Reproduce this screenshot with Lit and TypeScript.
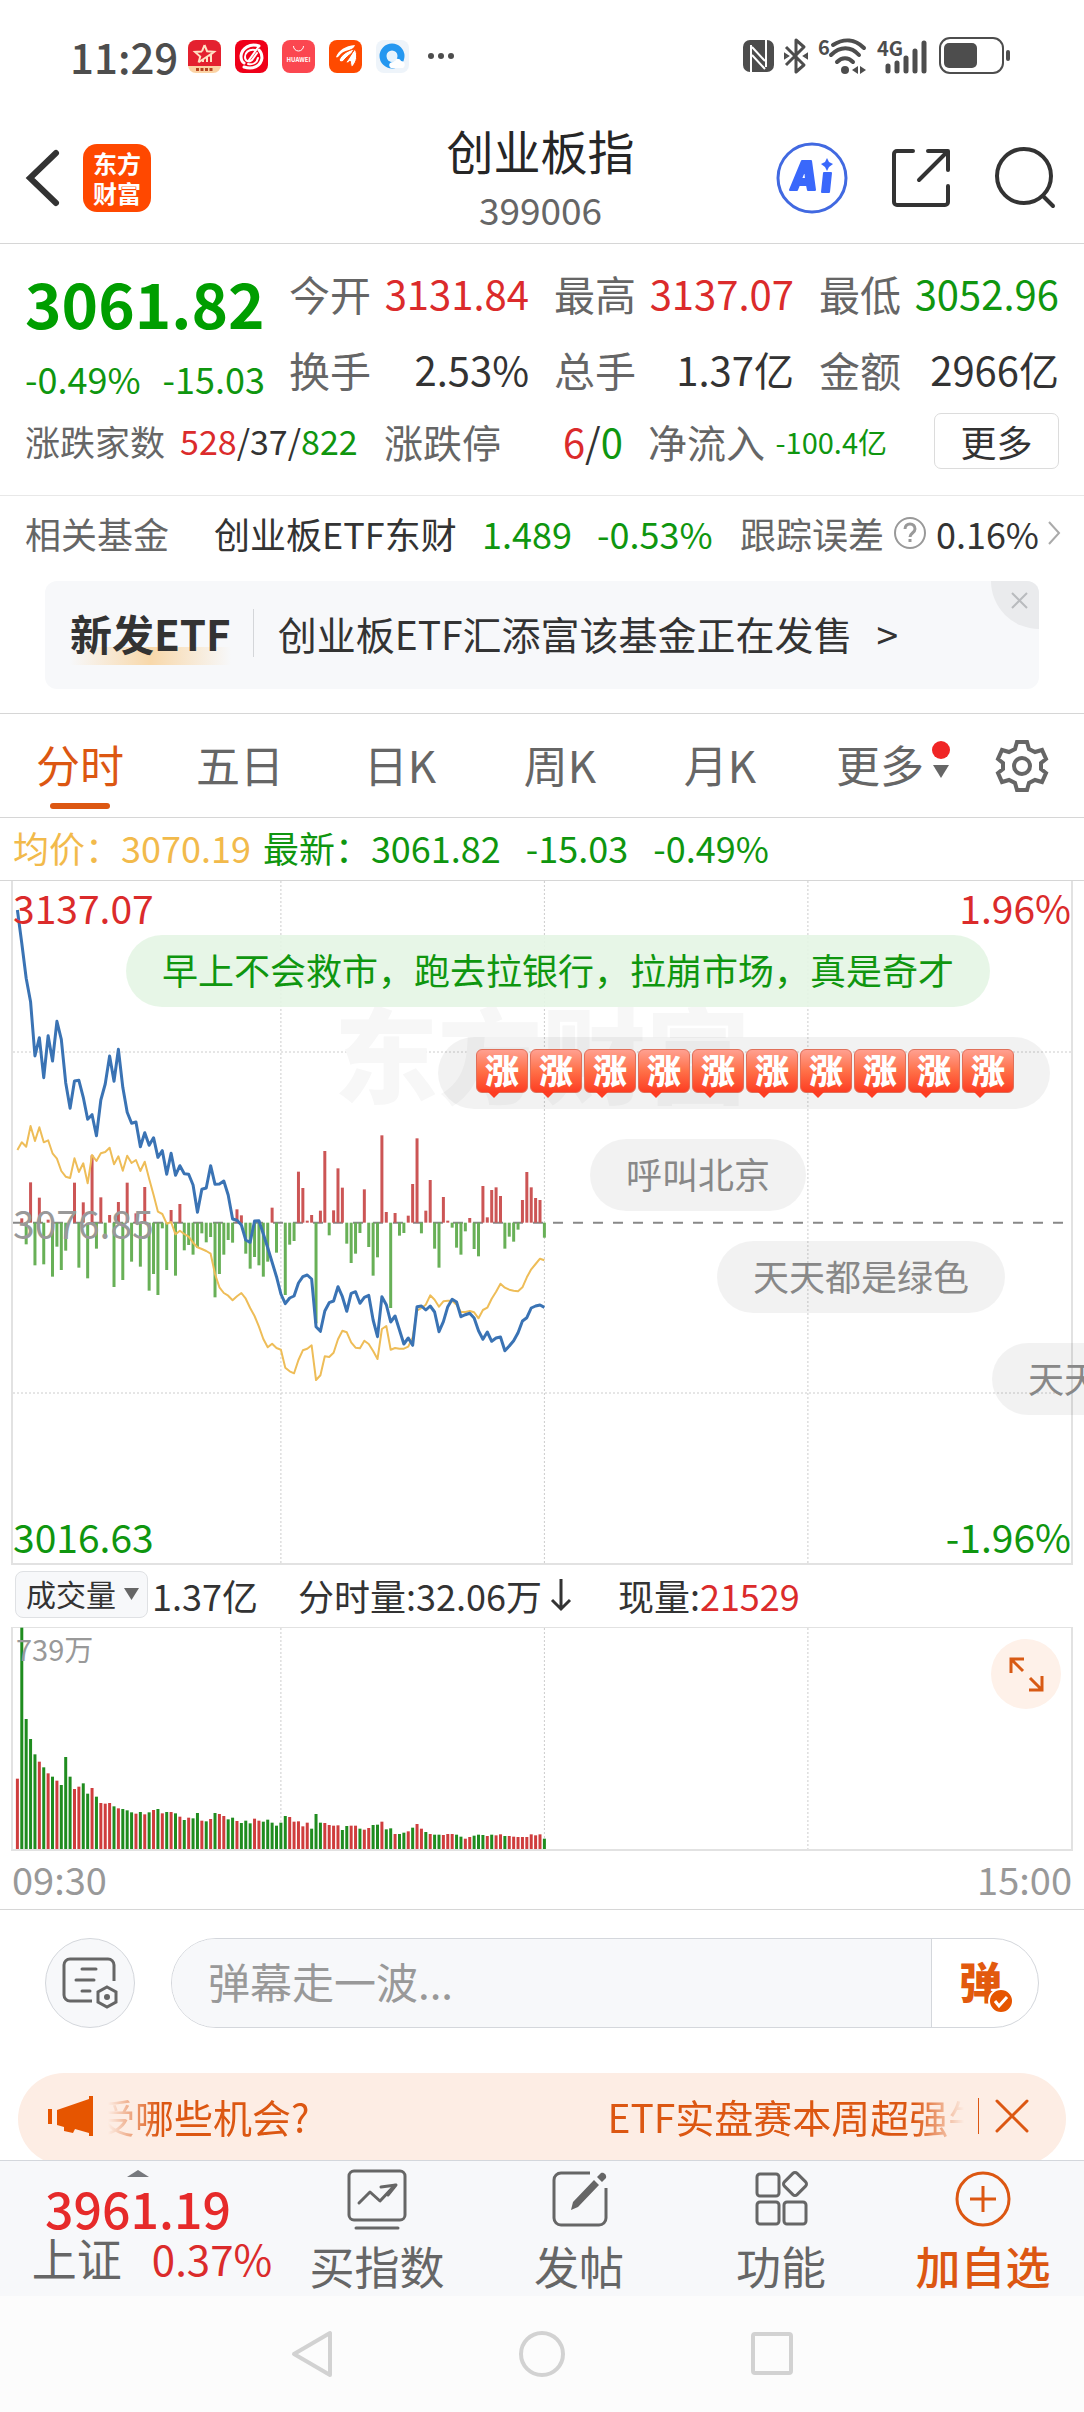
import { LitElement, html, svg, css } from "lit";

/* ---------- intraday series: one entry per minute, 09:30 to 11:30 ---------- */

// Distance from the top of the price chart, in thirds of a pixel.
const PRICE = [
  87, 187, 292, 362, 525, 470, 590, 464, 540, 421, 475, 605, 682, 600, 598, 649, 715, 701, 764, 657,
  609, 525, 601, 505, 619, 694, 727, 723, 797, 755, 793, 770, 829, 809, 880, 817, 883, 854, 878, 880,
  912, 994, 925, 921, 854, 910, 909, 900, 942, 1014, 1018, 1032, 1077, 1084, 1020, 1019, 1059, 1100, 1144, 1187,
  1239, 1268, 1251, 1245, 1206, 1187, 1182, 1194, 1337, 1351, 1290, 1265, 1260, 1217, 1247, 1291, 1237, 1232, 1267, 1249,
  1243, 1317, 1367, 1247, 1271, 1323, 1305, 1347, 1389, 1371, 1393, 1277, 1275, 1287, 1275, 1293, 1352, 1322, 1277, 1255,
  1263, 1307, 1301, 1297, 1311, 1349, 1375, 1353, 1381, 1371, 1368, 1409, 1395, 1379, 1355, 1320, 1310, 1281, 1275, 1272,
  1279,
];

const AVERAGE = [
  807, 784, 797, 735, 780, 739, 784, 778, 817, 833, 870, 887, 891, 832, 873, 847, 907, 822, 840, 817,
  813, 800, 850, 826, 869, 824, 846, 837, 870, 842, 893, 941, 992, 999, 1028, 1023, 1060, 1049, 1059, 1067,
  1085, 1099, 1104, 1110, 1118, 1179, 1219, 1236, 1244, 1258, 1246, 1236, 1253, 1281, 1305, 1337, 1374, 1399, 1388, 1401,
  1406, 1460, 1471, 1477, 1437, 1408, 1403, 1393, 1497, 1483, 1426, 1428, 1415, 1375, 1349, 1354, 1384, 1400, 1402, 1379,
  1389, 1410, 1434, 1344, 1335, 1406, 1401, 1403, 1403, 1397, 1369, 1289, 1281, 1271, 1243, 1256, 1277, 1261, 1259, 1259,
  1271, 1293, 1293, 1290, 1294, 1312, 1287, 1280, 1253, 1232, 1208, 1220, 1226, 1229, 1231, 1219, 1189, 1165, 1149, 1133,
  1138,
];

// Momentum bars around the previous close; positive rises, negative falls.
const MOMENTUM = [
  0, 13, -65, 121, -128, 75, -125, 9, -162, -72, -142, -84, 0, 120, -135, 61, -167, 202, -78, 76,
  -45, 23, -193, 62, -172, 120, -117, 28, -132, 107, -204, -154, -217, -17, -142, 38, -159, 56, -83, -67,
  -96, -75, -32, -59, -43, -224, -154, -96, -52, -60, 40, 22, -93, -138, -103, -128, -162, -117, 45, -90,
  0, -217, -66, -55, 153, 104, 6, 23, -302, 36, 215, -38, 37, 163, 105, -63, -121, -93, -31, 100,
  -73, -159, -104, 262, 32, -256, 29, -39, -31, 21, 116, 253, -32, 36, 128, -78, -135, 77, 6, -15,
  -75, -96, -26, 14, -79, -101, 110, 16, 98, 106, 80, -78, -42, -57, -21, 68, 152, 106, 74, 68,
  -45,
];

// Minute volume; positive is drawn red, negative green.
const VOLUME = [
  211, -664, -390, -330, -284, 262, -245, 227, -217, 205, -192, -276, -217, 180, 187, -197, -166, 183, -157, 138,
  136, 138, -128, 122, -120, -116, -110, 106, -111, 104, -110, 117, -120, 107, -111, 111, -107, 97, -87, 94,
  -92, -108, 85, -83, 90, -108, 105, 99, -89, -94, 84, -78, -85, -77, 91, 85, -82, -88, -79, -70,
  -79, -99, 96, 82, 83, 68, 79, -61, -105, -79, 78, 72, 70, 71, -57, -69, 70, 70, -61, 58,
  63, -72, -73, 82, -59, -62, 45, -45, -49, 53, -64, 75, 61, -51, 45, -43, -43, 42, 45, 45,
  -43, -37, 31, 36, -40, -43, -42, 39, -43, 41, 44, -39, 39, 37, 36, 36, 36, 44, 41, 44,
  -31,
];

const CHART_W = 1060;
const STEP = 4.4;
const PRICE_H = 682;
const VOLUME_H = 221;
const xOf = (i: number) => (i + 1) * STEP;
const points = (s: number[]) => s.map((v, i) => `${xOf(i).toFixed(1)},${(v / 3).toFixed(1)}`).join(" ");

const base = css`
  :host {
    display: block;
    font-family: "Noto Sans CJK SC", "Noto Sans", sans-serif;
    color: #333;
  }
  * {
    box-sizing: border-box;
  }
  svg {
    display: block;
    flex: none;
    overflow: visible;
  }
  button,
  input,
  select {
    font: inherit;
    color: inherit;
    margin: 0;
    padding: 0;
    border: 0;
    background: none;
    border-radius: 0;
    text-align: inherit;
  }
  .up {
    color: #db2b2b;
  }
  .down {
    color: #0f960f;
  }
`;

/* ------------------------------ status bar ------------------------------ */

class StatusBar extends LitElement {
  static styles = [
    base,
    css`
      .bar {
        display: flex;
        justify-content: space-between;
        align-items: center;
        height: 108px;
        padding: 4px 72px 0 70px;
        color: #4d4d4d;
      }
      .group {
        display: flex;
        align-items: center;
      }
      .time {
        font-size: 42px;
        font-weight: 500;
        line-height: 48px;
        margin-right: 10px;
      }
      .apps {
        display: flex;
        gap: 14px;
        margin-right: 18px;
      }
      .signals {
        gap: 9px;
      }
      text {
        font-family: "Noto Sans CJK SC", sans-serif;
      }
    `,
  ];
  render() {
    return html`
      <div class="bar">
        <div class="group">
          <span class="time">11:29</span>
          <span class="apps">
            <svg width="33" height="33" viewBox="0 0 33 33">
              <rect width="33" height="33" rx="8" fill="#fbd3a4" />
              <path d="M0 8a8 8 0 0 1 8-8h17a8 8 0 0 1 8 8v18H0z" fill="#e4212f" />
              <path d="M16.500 5l2.600 6.200 7 .5-5.200 4.300M14 11.400l-7 .5 5.200 4.600-1.600 6M16.500 5l-2.500 6.400" fill="none" stroke="#ffe3c4" stroke-width="2" />
              <path d="M11 22l12-8M15 22v-2M19 22v-5M23 22v-7" stroke="#ffe3c4" stroke-width="2" fill="none" />
              <path d="M8 29.500h17" stroke="#b5431f" stroke-width="3" stroke-dasharray="3 1.500" />
            </svg>
            <svg width="33" height="33" viewBox="0 0 33 33">
              <rect width="33" height="33" rx="8" fill="#ef0019" />
              <path d="M24 6C15 3 7 8 6 16c0 3 1 6 3 7M9 27c9 3 17-1 18-9 0-3-1-6-3-8" fill="none" stroke="#fff" stroke-width="3" stroke-linecap="round" />
              <path d="M24 6L14 20M20 10c-7-1-10 3-10 7s4 6 7 3l5-7M13 24c5 1 9-1 10-6" fill="none" stroke="#fff" stroke-width="2" stroke-linecap="round" />
            </svg>
            <svg width="33" height="33" viewBox="0 0 33 33">
              <rect width="33" height="33" rx="8" fill="#fb4750" />
              <path d="M11.500 6a5 5 0 0 0 10 0" fill="none" stroke="#fff" stroke-width="1" />
              <text x="16.500" y="22" fill="#fff" font-size="6" font-weight="700" text-anchor="middle">HUAWEI</text>
            </svg>
            <svg width="33" height="33" viewBox="0 0 33 33">
              <rect width="33" height="33" rx="8" fill="#ff4a00" />
              <path d="M7 17C10 10 16 6 26 5c-1 3-3 4-6 5-5 1-8 3-10 6-1 1-2 2-3 1z" fill="#fff" />
              <path d="M10 20c3-6 8-9 15-11-1 5-6 6-9 10-2 3-4 4-6 1zM17 22c3-3 5-8 9-13 3 6 2 13-3 18-2-2-1-5-2-6-1 1-3 3-4 1z" fill="#fff" stroke="#ff4a00" stroke-width="1" />
            </svg>
            <svg width="33" height="33" viewBox="0 0 33 33">
              <rect width="33" height="33" rx="8" fill="#eef4fa" />
              <circle cx="16" cy="16" r="9" fill="none" stroke="#2497f0" stroke-width="7" />
              <path d="M15 28c-3-2-2-6 2-6 1-4 7-4 8-1 4 0 5 5 2 7z" fill="#fff" />
              <circle cx="16" cy="17" r="5" fill="#e6f3fd" />
            </svg>
          </span>
          <svg width="28" height="8" viewBox="0 0 28 8" fill="#4d4d4d">
            <circle cx="4" cy="4" r="3" /><circle cx="14" cy="4" r="3" /><circle cx="24" cy="4" r="3" />
          </svg>
        </div>
        <div class="group signals">
          <svg width="31" height="34" viewBox="0 0 31 34">
            <rect y="1" width="31" height="32" rx="7" fill="#4d4d4d" />
            <path d="M8 6v27M23 1v27" stroke="#fff" stroke-width="2" />
            <path d="M9 8l13 14M9 16l13 14" stroke="#fff" stroke-width="2" />
          </svg>
          <svg width="26" height="36" viewBox="0 0 26 36" fill="none" stroke="#4d4d4d" stroke-width="3">
            <path d="M3 9l18 18-8 7V2l8 7L3 27" stroke-linejoin="round" />
            <path d="M2 16l3 2-3 2zM24 16l-3 2 3 2z" stroke-width="2" />
          </svg>
          <svg width="50" height="38" viewBox="0 0 50 38" fill="none" stroke="#4d4d4d" stroke-width="4" stroke-linecap="round">
            <text x="0" y="18" font-size="20" font-weight="700" fill="#4d4d4d" stroke="none">6</text>
            <path d="M15 8c11-7 22-6 31 3M13 18c9-9 20-9 28 0M19 25c5-5 11-5 16 0" />
            <circle cx="27" cy="33" r="4" fill="#4d4d4d" stroke="none" />
            <path d="M40 29v8l-6-4zM42 37v-8l6 4z" fill="#4d4d4d" stroke="none" />
          </svg>
          <svg width="52" height="38" viewBox="0 0 52 38" stroke="#4d4d4d" stroke-width="5" stroke-linecap="round">
            <text x="0" y="19" font-size="20" font-weight="700" fill="#4d4d4d" stroke="none">4G</text>
            <path d="M11 29v5M20 26v8M29 21v13M38 14v20M47 6v28" />
          </svg>
          <svg width="74" height="38" viewBox="0 0 74 38">
            <rect x="2" y="1" width="63" height="35" rx="10" fill="none" stroke="#4d4d4d" stroke-width="2" />
            <rect x="6" y="6" width="33" height="25" rx="5" fill="#4d4d4d" />
            <rect x="68" y="13" width="4" height="11" rx="2" fill="#4d4d4d" />
          </svg>
        </div>
      </div>
    `;
  }
}
customElements.define("status-bar", StatusBar);

/* ------------------------------ page header ------------------------------ */

class PageHeader extends LitElement {
  static styles = [
    base,
    css`
      .bar {
        display: grid;
        grid-template-columns: 1fr auto 1fr;
        align-items: center;
        height: 136px;
        padding: 4px 28px 0 25px;
        border-bottom: 1px solid #d6d6d6;
      }
      .side {
        display: flex;
        align-items: center;
      }
      .left {
        gap: 22px;
      }
      .right {
        justify-content: flex-end;
        gap: 43px;
      }
      .title {
        text-align: center;
        margin: 0;
        font-weight: 400;
      }
      .name {
        display: block;
        font-size: 47px;
        line-height: 62px;
        color: #262626;
      }
      .code {
        display: block;
        font-size: 37px;
        line-height: 56px;
        color: #666;
      }
      .logo {
        display: grid;
        place-content: center;
        width: 68px;
        height: 68px;
        border-radius: 14px;
        background: #ff4800;
        color: #fff;
        font-size: 24px;
        font-weight: 700;
        line-height: 30px;
        text-decoration: none;
      }
    `,
  ];
  render() {
    return html`
      <header class="bar">
        <div class="side left">
          <button aria-label="返回">
            <svg width="36" height="58" viewBox="0 0 36 58" fill="none" stroke="#333" stroke-width="6" stroke-linecap="round">
              <path d="M31 4L5 29l26 25" />
            </svg>
          </button>
          <a class="logo" href="#home"><span>东方</span><span>财富</span></a>
        </div>
        <h1 class="title"><span class="name">创业板指</span><span class="code">399006</span></h1>
        <div class="side right">
          <button aria-label="AI">
            <svg width="72" height="72" viewBox="0 0 72 72">
              <circle cx="36" cy="36" r="34" fill="#fff" stroke="#4169e1" stroke-width="3" />
              <path fill="#3a68fb" fill-rule="evenodd" stroke="#3a68fb" stroke-width="2" stroke-linejoin="round" d="M26 19h9l4 29h-7l-1-5h-8l-2 5h-7zM29 27l-4 10h5zM48 31h7l-2 19h-7z" />
              <path fill="#3a68fb" d="M51 16l2 4 4 2-4 3-2 4-2-4-4-3 4-2z" />
            </svg>
          </button>
          <button aria-label="分享">
            <svg width="60" height="60" viewBox="0 0 60 60" fill="none" stroke="#333" stroke-width="4" stroke-linecap="round" stroke-linejoin="round">
              <path d="M22 3H6a3 3 0 0 0-3 3v48a3 3 0 0 0 3 3h48a3 3 0 0 0 3-3V38M37 3h20v19M56 4L28 32" />
            </svg>
          </button>
          <button aria-label="搜索">
            <svg width="62" height="62" viewBox="0 0 62 62" fill="none" stroke="#333" stroke-width="4" stroke-linecap="round">
              <circle cx="30" cy="29" r="27" /><path d="M49 49l10 10" />
            </svg>
          </button>
        </div>
      </header>
    `;
  }
}
customElements.define("page-header", PageHeader);

/* ------------------------------ quote summary ------------------------------ */

const QUOTE = [
  ["今开", "3131.84", "up"],
  ["最高", "3137.07", "up"],
  ["最低", "3052.96", "down"],
  ["换手", "2.53%", ""],
  ["总手", "1.37亿", ""],
  ["金额", "2966亿", ""],
];

class QuoteSummary extends LitElement {
  static styles = [
    base,
    css`
      .summary {
        padding: 11px 25px 20px;
        border-bottom: 1px solid #e8e8e8;
      }
      .top {
        display: grid;
        grid-template-columns: minmax(0, 240fr) minmax(0, 770fr);
        column-gap: 24px;
      }
      .last {
        display: flex;
        flex-direction: column;
        white-space: nowrap;
      }
      .price {
        font-size: 62px;
        font-weight: 700;
        line-height: 94px;
        color: #009e00;
      }
      .change {
        display: flex;
        gap: 22px;
        font-size: 36px;
        line-height: 58px;
      }
      .pairs {
        display: grid;
        grid-template-columns: repeat(3, minmax(0, 1fr));
        column-gap: 25px;
        margin: 0;
      }
      .pair {
        display: flex;
        justify-content: space-between;
        margin: 0;
        line-height: 76px;
        font-size: 41px;
        white-space: nowrap;
      }
      dt {
        color: #666;
      }
      dd {
        margin: 0;
        font-size: 40px;
      }
      .row {
        display: grid;
        grid-template-columns: minmax(0, 334fr) minmax(0, 239fr) minmax(0, 239fr) minmax(0, 147fr);
        column-gap: 25px;
        align-items: center;
      }
      .row .pair {
        line-height: 68px;
      }
      .row .breadth {
        justify-content: flex-start;
        gap: 15px;
        font-size: 35px;
      }
      .breadth dd {
        font-size: 34px;
      }
      .row .limit,
      .row .flow {
        font-size: 39px;
      }
      .flow dd {
        font-size: 29px;
      }
      .more {
        justify-self: end;
        width: 125px;
        height: 56px;
        border: 1px solid #dcdcdc;
        border-radius: 7px;
        font-size: 36px;
        line-height: 50px;
        text-align: center;
      }
    `,
  ];
  render() {
    return html`
      <section class="summary">
        <div class="top">
          <div class="last">
            <span class="price">3061.82</span>
            <span class="change down"><span>-0.49%</span><span>-15.03</span></span>
          </div>
          <dl class="pairs">
            ${QUOTE.map(([k, v, c]) => html`<div class="pair"><dt>${k}</dt><dd class=${c}>${v}</dd></div>`)}
          </dl>
        </div>
        <div class="row">
          <dl class="pair breadth">
            <dt>涨跌家数</dt>
            <dd><span class="up">528</span>/37/<span class="down">822</span></dd>
          </dl>
          <dl class="pair limit">
            <dt>涨跌停</dt>
            <dd><span class="up">6</span>/<span class="down">0</span></dd>
          </dl>
          <dl class="pair flow">
            <dt>净流入</dt>
            <dd class="down">-100.4亿</dd>
          </dl>
          <button class="more">更多</button>
        </div>
      </section>
    `;
  }
}
customElements.define("quote-summary", QuoteSummary);

/* ------------------------------ related fund ------------------------------ */

class RelatedFund extends LitElement {
  static styles = [
    base,
    css`
      .fund {
        display: grid;
        grid-template-columns: 189fr 268fr 115fr 143fr 320fr;
        align-items: center;
        height: 85px;
        padding: 0 24px 12px 25px;
        font-size: 36px;
        line-height: 48px;
        white-space: nowrap;
        color: inherit;
        text-decoration: none;
      }
      .muted {
        color: #666;
      }
      .error {
        display: flex;
        align-items: center;
        justify-content: space-between;
      }
      .banner {
        position: relative;
        display: flex;
        align-items: center;
        height: 108px;
        margin: 0 45px 24px;
        padding: 0 25px 4px;
        border-radius: 12px;
        background: #f7f8fa;
        overflow: hidden;
        white-space: nowrap;
      }
      .tag {
        font-size: 42px;
        font-weight: 700;
        line-height: 48px;
        background: linear-gradient(90deg, #f7d5a000, #f8d8aa 50%, #f7d5a000) 0 100% / 100% 18px no-repeat;
        padding-bottom: 8px;
        margin-top: 8px;
      }
      .rule {
        width: 1px;
        height: 48px;
        background: #d4d6d9;
        margin: 0 24px 0 22px;
      }
      .offer {
        font-size: 39px;
        line-height: 54px;
        color: inherit;
        text-decoration: none;
      }
      .arrow {
        margin-left: 24px;
      }
      .close {
        position: absolute;
        top: 0;
        right: 0;
      }
    `,
  ];
  render() {
    return html`
      <a class="fund" href="#fund">
        <span class="muted">相关基金</span>
        <span>创业板ETF东财</span>
        <span class="down">1.489</span>
        <span class="down">-0.53%</span>
        <span class="error">
          <span class="muted">跟踪误差</span>
          <svg width="34" height="34" viewBox="0 0 34 34" fill="none" stroke="#999" stroke-width="2">
            <circle cx="17" cy="17" r="15" />
            <path d="M12 13c0-3 2-5 5-5s5 2 5 5c0 4-5 4-5 8" stroke-width="3" /><path d="M17 23v3" stroke-width="3" />
          </svg>
          <span>0.16%</span>
          <svg width="12" height="24" viewBox="0 0 12 24" fill="none" stroke="#aaa" stroke-width="2"><path d="M1 1l10 11L1 23" /></svg>
        </span>
      </a>
      <div class="banner">
        <strong class="tag">新发ETF</strong>
        <span class="rule"></span>
        <a class="offer" href="#offer">创业板ETF汇添富该基金正在发售<span class="arrow">&gt;</span></a>
        <button class="close" aria-label="关闭">
          <svg width="48" height="48" viewBox="0 0 48 48">
            <path d="M0 0h48v48A48 48 0 0 1 0 0z" fill="#eaebed" />
            <path d="M21 12l15 15M36 12L21 27" stroke="#b9bbbe" stroke-width="2" />
          </svg>
        </button>
      </div>
    `;
  }
}
customElements.define("related-fund", RelatedFund);

/* ------------------------------ period tabs ------------------------------ */

class PeriodTabs extends LitElement {
  static styles = [
    base,
    css`
      .tabs {
        display: grid;
        grid-template-columns: repeat(6, 160fr) 124fr;
        height: 105px;
        border: solid #d6d6d6;
        border-width: 1px 0;
      }
      .tab {
        display: flex;
        flex-direction: column;
        align-items: center;
        justify-content: flex-end;
        gap: 9px;
        font-size: 44px;
        line-height: 60px;
        color: #666;
        padding-bottom: 8px;
      }
      .tab::after {
        content: "";
        width: 60px;
        height: 6px;
        border-radius: 3px;
      }
      .on {
        color: #dc5712;
      }
      .on::after {
        background: #dc5712;
      }
      .wrap {
        position: relative;
      }
      .mark {
        position: absolute;
        left: 100%;
        top: 8px;
      }
      .gear {
        display: grid;
        place-items: center;
      }
    `,
  ];
  render() {
    return html`
      <nav class="tabs">
        ${["分时", "五日", "日K", "周K", "月K"].map((t, i) => html`<button class="tab ${i === 0 ? "on" : ""}">${t}</button>`)}
        <button class="tab">
          <span class="wrap">更多
            <svg class="mark" width="28" height="42" viewBox="0 0 28 42">
              <circle cx="17" cy="8" r="9" fill="#f02525" /><path d="M9 23h16l-8 13z" fill="#666" />
            </svg>
          </span>
        </button>
        <button class="gear" aria-label="设置">
          <svg width="54" height="54" viewBox="0 0 54 54" fill="none" stroke="#666" stroke-width="4">
            <path d="M22 3h10l2 7 6 3 7-2 4 9-5 4v6l5 4-4 9-7-2-6 3-2 7H22l-2-7-6-3-7 2-4-9 5-4v-6l-5-4 4-9 7 2 6-3z" />
            <circle cx="27" cy="27" r="8" />
          </svg>
        </button>
      </nav>
    `;
  }
}
customElements.define("period-tabs", PeriodTabs);

/* ------------------------------ price chart ------------------------------ */

const DANMAKU = [
  { left: 126, text: "早上不会救市，跑去拉银行，拉崩市场，真是奇才", mine: true },
  { left: 438, rise: 10 },
  { left: 590, text: "呼叫北京" },
  { left: 717, text: "天天都是绿色" },
  { left: 992, text: "天天都是绿色" },
];

class PriceChart extends LitElement {
  static styles = [
    base,
    css`
      .legend {
        display: flex;
        align-items: center;
        height: 63px;
        padding: 0 13px 4px;
        border-bottom: 1px solid #d6d6d6;
        font-size: 36px;
        line-height: 48px;
        white-space: nowrap;
      }
      .avg {
        color: #f2ba4b;
        margin-right: 12px;
      }
      .delta {
        margin-left: 25px;
      }
      .stage {
        position: relative;
        overflow-x: clip;
      }
      .plot {
        position: relative;
        margin: 0 11px;
        border: solid #e2e2e2;
        border-width: 0 2px 2px;
      }
      .lines {
        width: 100%;
        height: 682px;
      }
      .lines * {
        vector-effect: non-scaling-stroke;
      }
      .watermark {
        position: absolute;
        inset: 110px 0 auto;
        text-align: center;
        font-size: 104px;
        line-height: 120px;
        font-weight: 900;
        color: #f7f7f7;
      }
      .scale {
        position: absolute;
        inset: 0;
        padding: 2px 0 3px;
        display: grid;
        grid-template-columns: 1fr 1fr;
        align-content: space-between;
        align-items: center;
        font-size: 39px;
        line-height: 48px;
      }
      .scale > :nth-child(even) {
        text-align: right;
      }
      .mid {
        color: #999;
      }
      .lanes {
        position: absolute;
        inset: 54px 0 auto;
        display: flex;
        flex-direction: column;
        align-items: flex-start;
        gap: 30px;
      }
      .pill {
        display: flex;
        align-items: center;
        height: 72px;
        padding: 0 36px 4px;
        border-radius: 36px;
        background: #0000000d;
        color: #888;
        font-size: 36px;
        line-height: 48px;
        white-space: nowrap;
      }
      .mine {
        background: #e4f5e4e6;
        color: #0f960f;
      }
      .badge {
        position: relative;
        width: 52px;
        height: 44px;
        margin: 0 0 0 2px;
        border-radius: 6px;
        border: 1px solid #e0705a;
        background: linear-gradient(#ffa090, #ff7048 50%, #fd3d22);
        color: #fff;
        font-size: 34px;
        font-weight: 900;
        line-height: 40px;
        text-align: center;
      }
      .badge::after {
        content: "";
        position: absolute;
        left: 11px;
        top: 100%;
        border: solid transparent;
        border-width: 0 6px;
        border-top: 6px solid #fd3d22;
      }
    `,
  ];
  render() {
    const mid = 1025 / 3;
    return html`
      <div class="legend">
        <span class="avg">均价：3070.19</span>
        <span class="down">最新：3061.82</span>
        <span class="down delta">-15.03</span>
        <span class="down delta">-0.49%</span>
      </div>
      <div class="stage">
        <div class="plot">
          <div class="watermark" aria-hidden="true">东方财富</div>
          <div class="scale">
            <span class="up">3137.07</span><span class="up">1.96%</span>
            <span class="mid">3076.85</span><span></span>
            <span class="down">3016.63</span><span class="down">-1.96%</span>
          </div>
          <svg class="lines" viewBox="0 0 ${CHART_W} ${PRICE_H}" preserveAspectRatio="none" fill="none">
            <g stroke="#ccc" stroke-width="1" stroke-dasharray="2 2">
              ${[60, 120, 180].map((i) => svg`<path d="M${xOf(i)} 0V${PRICE_H}" />`)}
              ${[171, 512].map((y) => svg`<path d="M0 ${y}H${CHART_W}" />`)}
            </g>
            <path d="M0 ${mid}H${CHART_W}" stroke="#888" stroke-width="2" stroke-dasharray="10 10" />
            ${MOMENTUM.map((v, i) =>
              v ? svg`<path d="M${xOf(i)} ${mid}V${mid - v / 3}" stroke=${v > 0 ? "#cc5555" : "#68b057"} stroke-width="3" />` : ""
            )}
            <polyline points=${points(AVERAGE)} stroke="#eebd58" stroke-width="2" stroke-linejoin="round" />
            <polyline points=${points(PRICE)} stroke="#3a73b4" stroke-width="3" stroke-linejoin="round" />
          </svg>
        </div>
        <div class="lanes">
          ${DANMAKU.map(
            (d) => html`
              <div class="pill ${d.mine ? "mine" : ""}" style="margin-left:${d.left}px">
                ${d.rise ? Array.from({ length: d.rise }, () => html`<span class="badge">涨</span>`) : d.text}
              </div>
            `
          )}
        </div>
      </div>
    `;
  }
}
customElements.define("price-chart", PriceChart);

/* ------------------------------ volume chart ------------------------------ */

class VolumeChart extends LitElement {
  static styles = [
    base,
    css`
      .head {
        display: flex;
        align-items: center;
        height: 62px;
        padding: 0 15px 3px;
        font-size: 36px;
        line-height: 48px;
        white-space: nowrap;
      }
      .picker {
        display: flex;
        align-items: center;
        position: relative;
        margin-right: 4px;
      }
      .select {
        appearance: none;
        width: 133px;
        height: 47px;
        padding: 0 0 4px 10px;
        border: 1px solid #dfe1e4;
        border-radius: 8px;
        background: #f7f8fa;
        font-size: 30px;
        line-height: 42px;
      }
      .caret {
        position: absolute;
        right: 9px;
        top: 17px;
        pointer-events: none;
      }
      .minute {
        display: flex;
        align-items: center;
        gap: 9px;
        margin: 0 47px 0 40px;
      }
      .plot {
        position: relative;
        margin: 0 11px;
        border: 2px solid #e2e2e2;
        border-top-width: 1px;
      }
      .bars {
        width: 100%;
        height: 221px;
      }
      .bars * {
        vector-effect: non-scaling-stroke;
      }
      .max {
        position: absolute;
        left: 3px;
        top: 0;
        font-size: 29px;
        line-height: 40px;
        color: #999;
      }
      .expand {
        position: absolute;
        right: 10px;
        top: 11px;
      }
      .axis {
        display: flex;
        justify-content: space-between;
        height: 59px;
        padding: 0 12px;
        border-bottom: 1px solid #d6d6d6;
        font-size: 38px;
        line-height: 56px;
        color: #999;
      }
    `,
  ];
  render() {
    return html`
      <div class="head">
        <label class="picker">
          <select class="select" aria-label="指标"><option>成交量</option></select>
          <svg class="caret" width="15" height="12" viewBox="0 0 15 12"><path d="M0 0h15L7.500 12z" fill="#666" /></svg>
        </label>
        <span>1.37亿</span>
        <span class="minute">分时量:32.06万
          <svg width="20" height="32" viewBox="0 0 20 32" fill="none" stroke="#333" stroke-width="3"><path d="M10 0v30M1 21l9 9 9-9" /></svg>
        </span>
        <span>现量:<span class="up">21529</span></span>
      </div>
      <div class="plot">
        <svg class="bars" viewBox="0 0 ${CHART_W} ${VOLUME_H}" preserveAspectRatio="none" fill="none">
          <g stroke="#ccc" stroke-width="1" stroke-dasharray="2 2">
            ${[60, 120, 180].map((i) => svg`<path d="M${xOf(i)} 0V${VOLUME_H}" />`)}
          </g>
          ${VOLUME.map(
            (v, i) => svg`<path d="M${xOf(i)} ${VOLUME_H}V${VOLUME_H - Math.abs(v) / 3}" stroke=${v > 0 ? "#cf3d3d" : "#1f8c1f"} stroke-width="3" />`
          )}
        </svg>
        <span class="max">739万</span>
        <button class="expand" aria-label="全屏">
          <svg width="70" height="70" viewBox="0 0 70 70">
            <circle cx="35" cy="35" r="35" fill="#fef1e9" />
            <path d="M33 20H20v14M20 20l12 12M38 51h13V37M51 51L39 39" fill="none" stroke="#d85a14" stroke-width="3" />
          </svg>
        </button>
      </div>
      <div class="axis"><span>09:30</span><span>15:00</span></div>
    `;
  }
}
customElements.define("volume-chart", VolumeChart);

/* ------------------------------ danmaku composer ------------------------------ */

class DanmakuComposer extends LitElement {
  static styles = [
    base,
    css`
      .composer {
        display: flex;
        gap: 36px;
        padding: 28px 45px 45px;
      }
      .prefs {
        flex: none;
        display: grid;
        place-items: center;
        width: 90px;
        height: 90px;
        border: 1px solid #d4d7dc;
        border-radius: 45px;
        background: #f7f8fa;
      }
      .field {
        flex: 1;
        display: flex;
        height: 90px;
        border: 1px solid #d4d7dc;
        border-radius: 45px;
        overflow: hidden;
      }
      .text {
        flex: 1;
        min-width: 0;
        padding: 0 36px 6px;
        background: #f7f8fa;
        font-size: 42px;
      }
      .text::placeholder {
        color: #999;
        opacity: 1;
      }
      .send {
        position: relative;
        width: 107px;
        padding: 0 0 6px 27px;
        border-left: 1px solid #d4d7dc;
        color: #e25a0e;
        font-size: 43px;
        font-weight: 900;
      }
      .ok {
        position: absolute;
        left: 56px;
        top: 49px;
      }
    `,
  ];
  render() {
    return html`
      <div class="composer">
        <button class="prefs" aria-label="弹幕设置">
          <svg width="56" height="54" viewBox="0 0 56 54" fill="none" stroke="#666" stroke-width="3">
            <path d="M52 25V9a6 6 0 0 0-6-6H8a6 6 0 0 0-6 6v30a6 6 0 0 0 6 6h22" />
            <path d="M20 13h14M14 24h18M20 35h8" stroke-linecap="round" />
            <path d="M45 31l9 5v10l-9 5-9-5V36z" /><circle cx="45" cy="41" r="3" fill="#666" stroke="none" />
          </svg>
        </button>
        <div class="field">
          <input class="text" aria-label="弹幕" placeholder="弹幕走一波..." />
          <button class="send">弹
            <svg class="ok" width="26" height="26" viewBox="0 0 26 26">
              <circle cx="13" cy="13" r="12" fill="#e65500" stroke="#fff" stroke-width="2" />
              <path d="M7 13l4 5 8-9" fill="none" stroke="#fff" stroke-width="3" />
            </svg>
          </button>
        </div>
      </div>
    `;
  }
}
customElements.define("danmaku-composer", DanmakuComposer);

/* ------------------------------ notice ticker ------------------------------ */

class NoticeTicker extends LitElement {
  static styles = [
    base,
    css`
      .clip {
        overflow: hidden;
        padding: 0 18px;
        height: 87px;
      }
      .notice {
        display: flex;
        align-items: center;
        height: 92px;
        padding: 0 37px 6px 30px;
        border-radius: 46px;
        background: #fdede4;
        color: #dc5712;
      }
      .track {
        flex: 1;
        min-width: 0;
        display: flex;
        gap: 298px;
        margin: 0 14px;
        overflow: hidden;
        white-space: nowrap;
        font-size: 39px;
        line-height: 56px;
        mask-image: linear-gradient(90deg, transparent, #000 50px, #000 calc(100% - 50px), transparent);
      }
      .first {
        margin-left: -12px;
      }
      .rule {
        width: 1px;
        height: 36px;
        margin-right: 16px;
        background: #dc5712;
      }
    `,
  ];
  render() {
    return html`
      <div class="clip">
        <div class="notice">
          <svg width="46" height="40" viewBox="0 0 46 40" fill="#e65500">
            <path d="M0 13h4v15H0zM9 14L41 3V0h4v40h-4v-3l-14-4-2 4-9-2v-4l-7-2z" />
          </svg>
          <div class="track">
            <span class="first">受哪些机会?</span>
            <span>ETF实盘赛本周超强牛</span>
          </div>
          <span class="rule"></span>
          <button aria-label="关闭">
            <svg width="34" height="34" viewBox="0 0 34 34" stroke="#dc5712" stroke-width="3" stroke-linecap="round"><path d="M2 2l30 30M32 2L2 32" /></svg>
          </button>
        </div>
      </div>
    `;
  }
}
customElements.define("notice-ticker", NoticeTicker);

/* ------------------------------ bottom bars ------------------------------ */

const ICONS = {
  buy: svg`<rect x="2" y="2" width="56" height="49" rx="5" /><path d="M9 59h42" stroke-linecap="round" /><path d="M12 34l11-11 10 9 15-16M34 18l15-2-8 10" stroke-linecap="round" stroke-linejoin="round" />`,
  post: svg`<path d="M41 4H12a7 7 0 0 0-7 7v38a7 7 0 0 0 7 7h38a7 7 0 0 0 7-7V19" /><path d="M45 11l5 5-21 22-7 3 2-8zM48 8l4-4c3-1 6 2 5 5l-4 4z" fill="#666" stroke="none" />`,
  tools: svg`<rect x="6" y="5" width="22" height="22" rx="3" /><rect x="6" y="33" width="22" height="22" rx="3" /><rect x="33" y="33" width="22" height="22" rx="3" /><rect x="35" y="6" width="18" height="18" rx="3" transform="rotate(45 44 15)" />`,
  add: svg`<circle cx="30" cy="30" r="26" /><path d="M17 30h26M30 17v26" />`,
};

class BottomBar extends LitElement {
  static styles = [
    base,
    css`
      .bar {
        display: grid;
        grid-template-columns: 276fr repeat(4, 202fr);
        height: 136px;
        border-top: 1px solid #d4d7dc;
        background: #f7f8fa;
        color: #666;
      }
      .index {
        display: flex;
        flex-direction: column;
        align-items: center;
        padding-top: 9px;
        white-space: nowrap;
      }
      .value {
        font-size: 50px;
        line-height: 60px;
        color: #e62a2a;
        font-weight: 500;
      }
      .sub {
        display: flex;
        align-items: center;
        gap: 30px;
        padding-left: 28px;
        font-size: 45px;
        line-height: 42px;
      }
      .rate {
        font-size: 42px;
      }
      .item {
        display: flex;
        flex-direction: column;
        align-items: center;
        padding-top: 8px;
        gap: 8px;
        font-size: 45px;
        line-height: 54px;
        white-space: nowrap;
      }
      .accent {
        color: #dc5712;
        font-weight: 500;
      }
      .system {
        display: flex;
        justify-content: center;
        align-items: center;
        gap: 182px;
        height: 116px;
        background: #fcfcfc;
      }
    `,
  ];
  render() {
    const item = (icon: unknown, text: string, accent = false) => html`
      <button class="item ${accent ? "accent" : ""}">
        <svg width="60" height="62" viewBox="0 0 60 62" fill="none" stroke="currentColor" stroke-width="3">${icon}</svg>
        ${text}
      </button>
    `;
    return html`
      <nav class="bar">
        <button class="index">
          <svg width="22" height="7" viewBox="0 0 22 7"><path d="M0 7L11 0l11 7z" fill="#77797d" /></svg>
          <span class="value">3961.19</span>
          <span class="sub">上证<span class="rate up">0.37%</span></span>
        </button>
        ${item(ICONS.buy, "买指数")} ${item(ICONS.post, "发帖")} ${item(ICONS.tools, "功能")} ${item(ICONS.add, "加自选", true)}
      </nav>
      <div class="system">
        <button aria-label="后退">
          <svg width="48" height="50" viewBox="0 0 48 50" fill="none" stroke="#d2d2d2" stroke-width="4" stroke-linejoin="round"><path d="M42 4v42L6 25z" /></svg>
        </button>
        <button aria-label="主页">
          <svg width="48" height="48" viewBox="0 0 48 48" fill="none" stroke="#d2d2d2" stroke-width="4"><circle cx="24" cy="24" r="21" /></svg>
        </button>
        <button aria-label="最近任务">
          <svg width="48" height="48" viewBox="0 0 48 48" fill="none" stroke="#d2d2d2" stroke-width="4"><rect x="5" y="4" width="38" height="39" rx="2" /></svg>
        </button>
      </div>
    `;
  }
}
customElements.define("bottom-bar", BottomBar);

class AppRoot extends LitElement {
  static styles = [
    base,
    css`
      :host {
        background: #fff;
        overflow: hidden;
      }
    `,
  ];
  render() {
    return html`
      <status-bar></status-bar>
      <page-header></page-header>
      <main>
        <quote-summary></quote-summary>
        <related-fund></related-fund>
        <period-tabs></period-tabs>
        <price-chart></price-chart>
        <volume-chart></volume-chart>
        <danmaku-composer></danmaku-composer>
        <notice-ticker></notice-ticker>
      </main>
      <bottom-bar></bottom-bar>
    `;
  }
}
customElements.define("app-root", AppRoot);
